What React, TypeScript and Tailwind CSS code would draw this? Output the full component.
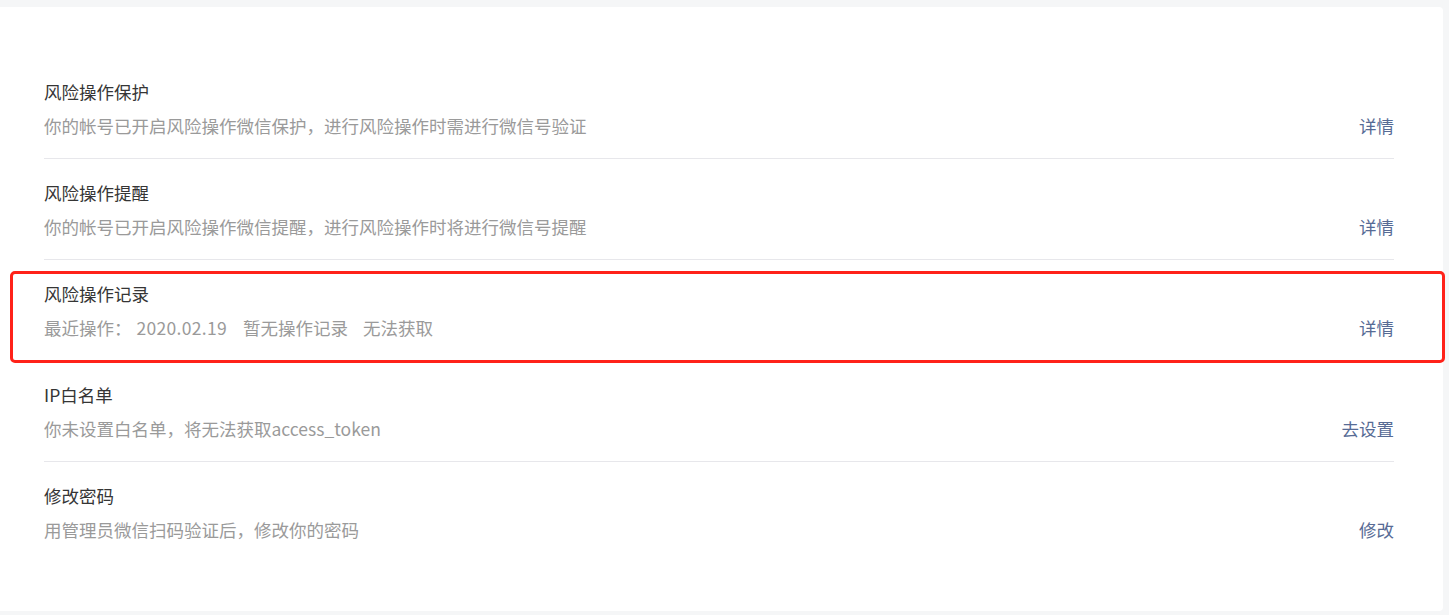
const rows = [
  {
    title: "风险操作保护",
    desc: "你的帐号已开启风险操作微信保护，进行风险操作时需进行微信号验证",
    action: "详情",
  },
  {
    title: "风险操作提醒",
    desc: "你的帐号已开启风险操作微信提醒，进行风险操作时将进行微信号提醒",
    action: "详情",
  },
  {
    title: "风险操作记录",
    desc: (
      <>
        <span>最近操作：</span>
        <span className="ml-[5px] tracking-[0.3px]">2020.02.19</span>
        <span className="ml-[16px]">暂无操作记录</span>
        <span className="ml-[15px]">无法获取</span>
      </>
    ),
    action: "详情",
    marked: true,
  },
  {
    title: "IP白名单",
    desc: "你未设置白名单，将无法获取access_token",
    action: "去设置",
  },
  {
    title: "修改密码",
    desc: "用管理员微信扫码验证后，修改你的密码",
    action: "修改",
  },
];

export default function App() {
  return (
    <div
      className="min-h-[615px] bg-[#f5f6f7] pt-[7px] pr-[6px] pb-[4px]"
      style={{ fontFamily: '"Noto Sans CJK SC", "Noto Sans", sans-serif' }}
    >
      <div className="relative bg-white rounded-r-[4px] pl-[44px] pr-[49px] pt-[51px] h-[604px]">
        {rows.map((row, i) => (
          <div key={i} className="relative">
            <div
              className={`flex items-end justify-between pt-[22px] pb-[20px] ${
                i < rows.length - 1 ? "border-b border-[#e7e7eb]" : ""
              }`}
            >
              <div>
                <div className="text-[17.5px] leading-[24px] text-[#353535]">{row.title}</div>
                <div className="mt-[10px] text-[17.5px] leading-[24px] text-[#9a9a9a]">{row.desc}</div>
              </div>
              <a className="text-[17.5px] leading-[24px] text-[#576b95] cursor-pointer">{row.action}</a>
            </div>
            {row.marked && (
              <div className="absolute left-[-34px] right-[-51px] top-[11px] bottom-[-2px] border-[3px] border-[#ff2219] rounded-[5px] pointer-events-none" />
            )}
          </div>
        ))}
      </div>
    </div>
  );
}
